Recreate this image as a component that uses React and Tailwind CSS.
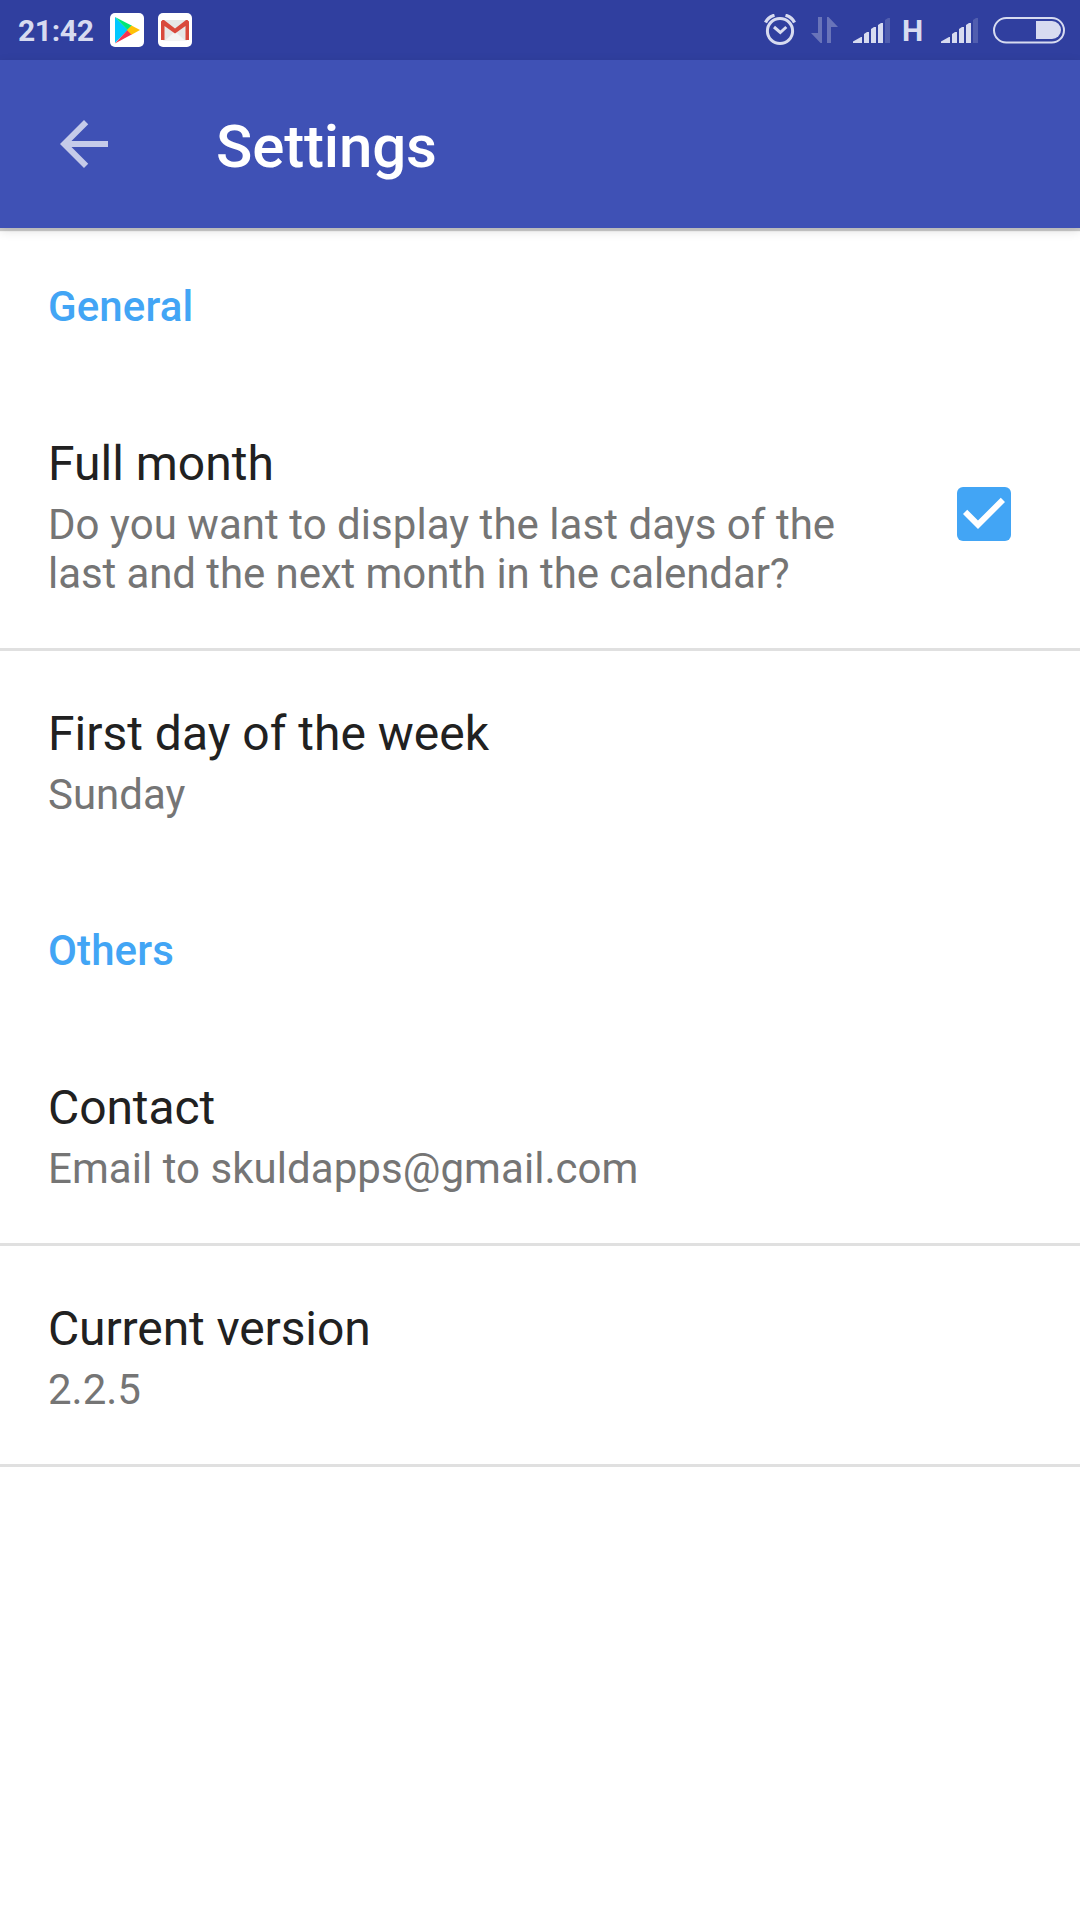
function Signal({ className }) {
  return (
    <svg className={`mt-[2px] ${className}`} width="38" height="26" viewBox="0 0 38 26" fill="#d7dbf0">
      <path d="M0 25v-1.500l8-4.500h1v6z M11 25v-9l3-2h2v11z M18 25V11l3-2h2v16z M25 25V7l3-2h2v20z" />
      <path d="M32 25V2l3-2h2v25z" opacity=".2" />
    </svg>
  );
}

function StatusBar() {
  return (
    <div className="flex h-[60px] items-center bg-[#303f9f] text-[#d7dbf0]">
      <span className="ml-[18px] w-[92px] text-[30px] leading-[35px] font-bold tracking-[-0.35px]">21:42</span>
      <svg width="34" height="34" viewBox="0 0 34 34">
        <rect width="34" height="34" rx="5" fill="#fff" />
        <path d="M5 4v26l13-13z" fill="#00c8ff" />
        <path d="M5 4l17 8.700L17.500 17z" fill="#00e676" />
        <path d="M5 30.500l17-9.200L17.500 17z" fill="#f4334f" />
        <path d="M21.500 12.500l8.500 4.500-8.500 4.700L17 17z" fill="#ffc107" />
      </svg>
      <svg className="ml-[14px]" width="34" height="34" viewBox="0 0 34 34">
        <rect width="34" height="34" rx="5" fill="#fff" />
        <path d="M5 7h24v20.500H5z" fill="#e6e6e6" />
        <path d="M7 27.500l10-9 10 9z" fill="#f4f4f4" />
        <path d="M3 27V8.500L4.500 7H6l11 8.500L28 7h1.500L31 8.500V27h-3.500V13L17 20.500 6.500 13v14z" fill="#d9483b" />
      </svg>
      <svg className="ml-[572px]" width="32" height="32" viewBox="0 0 32 32" fill="none" stroke="#d7dbf0" strokeWidth="3">
        <circle cx="16" cy="17" r="12.600" />
        <path d="M10 13l6.300 5.500 6-5.500" />
        <path d="M1.500 8.500Q4 3 10.500 1.200M21.500 1.200Q28 3 30.500 8.500" strokeWidth="3.200" />
      </svg>
      <svg className="ml-[15px]" width="28" height="28" viewBox="0 0 28 28" fill="#6974b9">
        <path d="M7 1h4v26H9.500L0 17h7z" />
        <path d="M16 1h1.500L27 11h-7v16h-4z" />
      </svg>
      <Signal className="ml-[14px]" />
      <span className="ml-[11px] w-[27px] text-[30px] leading-[35px] font-bold">H</span>
      <Signal className="ml-[12px]" />
      <svg className="ml-[14px]" width="72" height="27" viewBox="0 0 72 27">
        <rect x="1" y="1" width="70" height="24.500" rx="12.250" fill="none" stroke="#d7dbf0" strokeWidth="2" />
        <path d="M43 4h16a9 9 0 0 1 0 18H43z" fill="#d7dbf0" />
      </svg>
    </div>
  );
}

function AppBar() {
  return (
    <header className="relative flex h-[168px] items-center bg-[#3f51b5] shadow-[0_3px_1px_rgba(0,0,0,0.2),0_3px_10px_rgba(0,0,0,0.12)]">
      <svg className="ml-[60px]" width="48" height="48" viewBox="0 0 16 16" fill="#c5cbe9">
        <path d="M16 7H3.830l5.590-5.590L8 0 0 8l8 8 1.410-1.410L3.830 9H16z" />
      </svg>
      <h1 className="ml-[108px] pt-[5px] text-[60px] leading-[70px] font-medium tracking-[-0.15px] text-white">Settings</h1>
    </header>
  );
}

function Category({ children }) {
  return (
    <h2 className="px-12 pt-[54px] pb-[50px] text-[42px] leading-[49px] font-medium tracking-[0.12px] text-[#42a5f5]">
      {children}
    </h2>
  );
}

function Preference({ title, summary, divider, children }) {
  return (
    <div className={`flex items-center border-b-[3px] pt-[55px] pb-[50px] pl-12 ${divider ? "border-[#e0e0e0]" : "border-transparent"}`}>
      <div className="w-[840px]">
        <div className="h-[64px] text-[48px] leading-[56px] text-[#212121]">{title}</div>
        <div className="text-[42px] leading-[49px] text-[#757575]">{summary}</div>
      </div>
      {children}
    </div>
  );
}

export default function App() {
  return (
    <div className="h-[1920px] w-[1080px] overflow-hidden bg-white font-['Roboto',sans-serif]">
      <StatusBar />
      <AppBar />
      <main>
        <Category>General</Category>
        <Preference
          title="Full month"
          summary={
            <>
              <span className="block tracking-[0.04px]">Do you want to display the last days of the</span>
              <span className="block tracking-[-0.08px]">last and the next month in the calendar?</span>
            </>
          }
          divider
        >
          <svg className="mb-[6px] ml-[69px]" width="54" height="54" viewBox="0 0 18 18">
            <rect width="18" height="18" rx="2" fill="#42a5f5" />
            <path d="M7 14L2 9l1.410-1.410L7 11.170l7.590-7.590L16 5z" fill="#fff" />
          </svg>
        </Preference>
        <Preference title="First day of the week" summary="Sunday" />
        <Category>Others</Category>
        <Preference
          title={<span className="tracking-[-0.1px]">Contact</span>}
          summary={<span className="tracking-[0.05px]">Email to skuldapps@gmail.com</span>}
          divider
        />
        <Preference title={<span className="tracking-[-0.12px]">Current version</span>} summary="2.2.5" divider />
      </main>
    </div>
  );
}
